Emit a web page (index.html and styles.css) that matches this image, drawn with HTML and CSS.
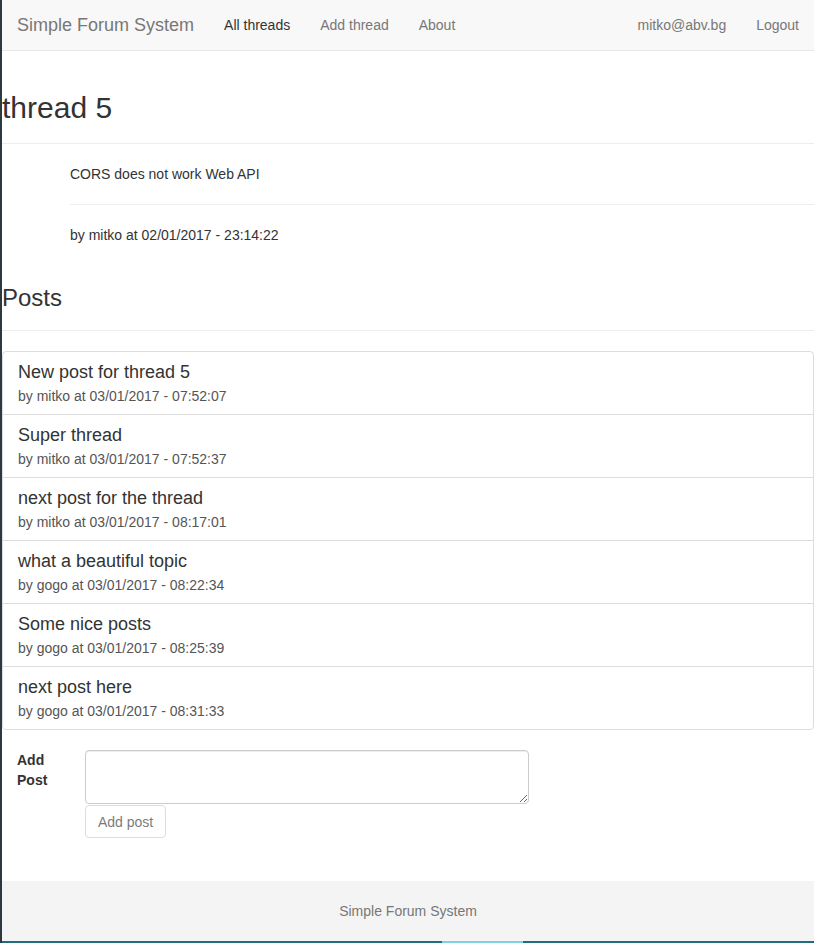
FILE: index.html
```html
<!DOCTYPE html>
<html>
<head>
<meta charset="utf-8">
<title>Simple Forum System</title>
<link rel="stylesheet" href="styles.css">
</head>
<body>
<div class="page">
  <nav class="navbar">
    <div class="nav-left">
      <a class="brand">Simple Forum System</a>
      <a class="nav-link active">All threads</a>
      <a class="nav-link">Add thread</a>
      <a class="nav-link">About</a>
    </div>
    <div class="nav-right">
      <a class="nav-link">mitko@abv.bg</a>
      <a class="nav-link">Logout</a>
    </div>
  </nav>

  <main class="main">
    <div class="page-header first">
      <h1>thread 5</h1>
    </div>
    <div class="thread-body">
      <p class="thread-text">CORS does not work Web API</p>
      <hr class="rule">
      <p class="thread-text">by mitko at 02/01/2017 - 23:14:22</p>
    </div>

    <div class="page-header second">
      <h3>Posts</h3>
    </div>

    <div class="list-group">
      <div class="list-item">
        <h4 class="item-heading">New post for thread 5</h4>
        <p class="item-text">by mitko at 03/01/2017 - 07:52:07</p>
      </div>
      <div class="list-item">
        <h4 class="item-heading">Super thread</h4>
        <p class="item-text">by mitko at 03/01/2017 - 07:52:37</p>
      </div>
      <div class="list-item">
        <h4 class="item-heading">next post for the thread</h4>
        <p class="item-text">by mitko at 03/01/2017 - 08:17:01</p>
      </div>
      <div class="list-item">
        <h4 class="item-heading">what a beautiful topic</h4>
        <p class="item-text">by gogo at 03/01/2017 - 08:22:34</p>
      </div>
      <div class="list-item">
        <h4 class="item-heading">Some nice posts</h4>
        <p class="item-text">by gogo at 03/01/2017 - 08:25:39</p>
      </div>
      <div class="list-item">
        <h4 class="item-heading">next post here</h4>
        <p class="item-text">by gogo at 03/01/2017 - 08:31:33</p>
      </div>
    </div>

    <form class="post-form">
      <label class="form-label">Add Post</label>
      <div class="form-controls">
        <textarea class="textarea" rows="2"></textarea>
        <button type="button" class="btn" disabled>Add post</button>
      </div>
    </form>
  </main>

  <footer class="footer">Simple Forum System</footer>
  <div class="bottom-edge"><div class="bottom-seg"></div></div>
</div>
</body>
</html>
```

FILE: styles.css
```css
* { box-sizing: border-box; }
html, body { margin: 0; padding: 0; }
body {
  font-family: "Liberation Sans", Arial, Helvetica, sans-serif;
  font-size: 14px;
  line-height: 20px;
  color: #333;
  background: #fff;
  border-left: 2px solid #1f8fa6;
  border-image: linear-gradient(to right, #2b3a40 50%, #1f8fa6 50%) 1;
  height: 943px;
  overflow: hidden;
}
.page { display: flex; flex-direction: column; height: 943px; }

.navbar {
  height: 51px;
  background: #f8f8f8;
  border-bottom: 1px solid #e7e7e7;
  display: flex;
  justify-content: space-between;
}
.nav-left, .nav-right { display: flex; }
.brand {
  font-size: 18px;
  line-height: 20px;
  padding: 15px;
  color: #777;
}
.nav-link {
  padding: 15px;
  color: #777;
  line-height: 20px;
}
.nav-link.active { color: #333; }

.main { flex: 1; }

.page-header {
  border-bottom: 1px solid #eee;
  padding-bottom: 9px;
  margin: 0 0 20px;
}
.page-header.first { padding-top: 40px; }
.page-header.second { padding-top: 40px; }
h1 {
  font-size: 30px;
  font-weight: 500;
  line-height: 33px;
  margin: 0 0 10px;
}
h3 {
  font-size: 24px;
  font-weight: 500;
  line-height: 26px;
  margin: 0 0 10px;
}

.thread-body { padding-left: 68px; }
.thread-text { margin: 0; line-height: 20px; }
.rule {
  border: 0;
  border-top: 1px solid #eee;
  margin: 20px 0 20px;
  height: 0;
}

.list-group {
  border: 1px solid #ddd;
  border-radius: 4px;
  margin-bottom: 20px;
}
.list-item {
  padding: 10px 15px;
  border-top: 1px solid #ddd;
  height: 63px;
}
.list-item:first-child { border-top: 0; height: 62px; }
.item-heading {
  font-size: 18px;
  font-weight: 500;
  line-height: 20px;
  margin: 0 0 5px;
  color: #333;
}
.item-text {
  margin: 0;
  line-height: 18px;
  color: #555;
}

.post-form { display: flex; padding-left: 15px; }
.form-label {
  width: 68px;
  padding-right: 30px;
  font-weight: bold;
  line-height: 20px;
}
.form-controls { display: flex; flex-direction: column; align-items: flex-start; }
.textarea {
  width: 444px;
  height: 54px;
  border: 1px solid #ccc;
  border-radius: 4px;
  box-shadow: inset 0 1px 1px rgba(0,0,0,.075);
  padding: 6px 12px;
  font-family: inherit;
  font-size: 14px;
  display: block;
  margin: 0;
}
.btn {
  margin-top: 1px;
  height: 33px;
  padding: 6px 12px;
  font-family: inherit;
  font-size: 14px;
  line-height: 20px;
  color: #333;
  background: #fff;
  border: 1px solid #ccc;
  border-radius: 4px;
  opacity: .65;
}

.footer {
  height: 60px;
  background: #f4f4f4;
  color: #777;
  text-align: center;
  line-height: 60px;
}
.bottom-edge {
  height: 2px;
  background: #1d6f80;
  position: relative;
}
.bottom-seg {
  position: absolute;
  left: 440px;
  width: 81px;
  top: 0;
  height: 2px;
  background: #7fd3e0;
}
```
